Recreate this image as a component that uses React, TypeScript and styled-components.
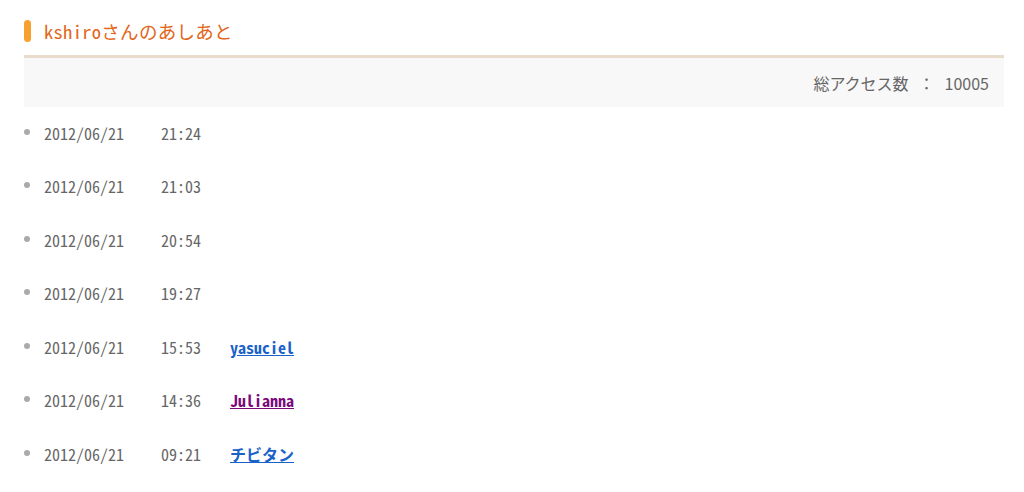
import React from "react";
import styled, { createGlobalStyle } from "styled-components";

const GlobalStyle = createGlobalStyle`
  html, body { margin: 0; padding: 0; background: #fff; }
  body { font-family: "Noto Sans Mono CJK JP", "Noto Sans CJK JP", monospace; }
`;

const Page = styled.div`
  padding: 0 20px 0 24px;
  width: 980px;
`;

const TitleBar = styled.h2`
  display: flex;
  align-items: center;
  gap: 13px;
  height: 55px;
  margin: 0;
  padding-top: 6px;
  box-sizing: border-box;
  font-size: 18.5px;
  font-weight: 400;
  color: #e2661a;
  letter-spacing: 0.3px;
`;

const Marker = styled.span`
  display: block;
  width: 7px;
  height: 22px;
  border-radius: 4px;
  background: #f7a030;
  margin-top: 0;
`;

const CountBox = styled.div`
  border-top: 3px solid #e9dccd;
  background: #f8f8f8;
  height: 49px;
  display: flex;
  align-items: center;
  justify-content: flex-end;
  padding-right: 15px;
  font-family: "Noto Sans CJK JP", "Noto Sans", sans-serif;
  font-size: 16px;
  color: #666;
  gap: 10px;
`;

const List = styled.ul`
  list-style: none;
  margin: 0;
  padding: 0;
`;

const Row = styled.li`
  display: flex;
  align-items: center;
  height: 53.5px;
  padding-bottom: 2px;
  box-sizing: border-box;
  font-size: 16px;
  color: #666;
`;

const Dot = styled.span`
  width: 6px;
  height: 6px;
  border-radius: 50%;
  background: #aaa;
  margin-right: 14px;
  margin-top: -2px;
`;

const DateCell = styled.span`
  width: 117px;
`;

const TimeCell = styled.span`
  width: 69px;
`;

const UserLink = styled.a<{ $visited?: boolean }>`
  color: ${(p) => (p.$visited ? "#7a0a7a" : "#1a62c8")};
  font-weight: 700;
  text-decoration: underline;
  font-size: 16px;
`;

const rows: { date: string; time: string; user?: string; visited?: boolean }[] = [
  { date: "2012/06/21", time: "21:24" },
  { date: "2012/06/21", time: "21:03" },
  { date: "2012/06/21", time: "20:54" },
  { date: "2012/06/21", time: "19:27" },
  { date: "2012/06/21", time: "15:53", user: "yasuciel" },
  { date: "2012/06/21", time: "14:36", user: "Julianna", visited: true },
  { date: "2012/06/21", time: "09:21", user: "チビタン" },
];

export default function App() {
  return (
    <Page>
      <GlobalStyle />
      <TitleBar>
        <Marker />
        kshiroさんのあしあと
      </TitleBar>
      <CountBox>
        <span>総アクセス数</span>
        <span>：</span>
        <span>10005</span>
      </CountBox>
      <List>
        {rows.map((r, i) => (
          <Row key={i}>
            <Dot />
            <DateCell>{r.date}</DateCell>
            <TimeCell>{r.time}</TimeCell>
            {r.user && (
              <UserLink href="#" $visited={r.visited}>
                {r.user}
              </UserLink>
            )}
          </Row>
        ))}
      </List>
    </Page>
  );
}
